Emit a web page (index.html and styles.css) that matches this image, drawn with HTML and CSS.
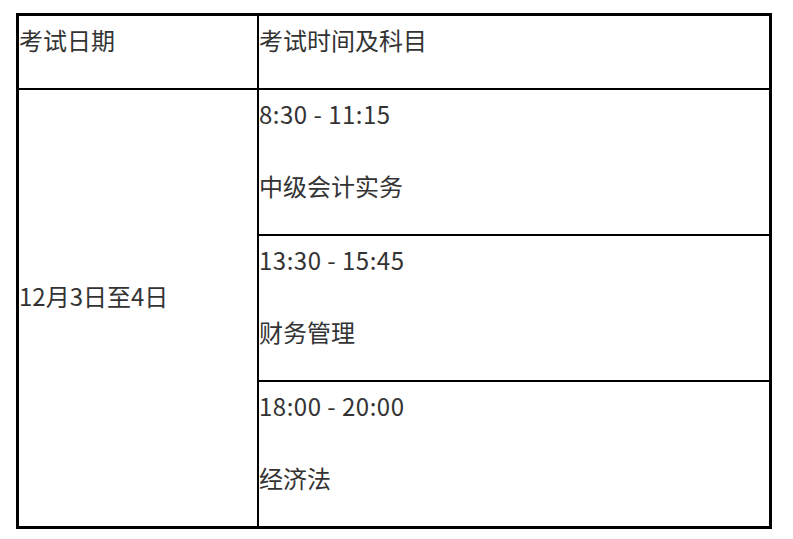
FILE: index.html
```html
<!DOCTYPE html>
<html lang="zh-CN">
<head>
<meta charset="utf-8">
<title>考试时间</title>
<link rel="stylesheet" href="styles.css">
</head>
<body>
<table class="exam">
  <tr>
    <th class="col-date"><p>考试日期</p></th>
    <th class="col-subj"><p>考试时间及科目</p></th>
  </tr>
  <tr>
    <td class="col-date mid" rowspan="3"><p>12月3日至4日</p></td>
    <td class="col-subj"><p class="time">8:30 - 11:15</p><p>中级会计实务</p></td>
  </tr>
  <tr>
    <td class="col-subj"><p class="time">13:30 - 15:45</p><p>财务管理</p></td>
  </tr>
  <tr>
    <td class="col-subj last"><p class="time">18:00 - 20:00</p><p>经济法</p></td>
  </tr>
</table>
</body>
</html>
```
FILE: styles.css
```css
html, body {
  margin: 0;
  padding: 0;
  background: #fff;
}
body {
  font-family: "Noto Sans CJK SC", "Noto Sans", sans-serif;
  font-size: 24px;
  color: #333;
}
.exam {
  margin: 13px 0 0 16px;
  border: 3px solid #000;
  border-spacing: 0;
  border-collapse: separate;
}
.exam th, .exam td {
  padding: 0;
  vertical-align: top;
  text-align: left;
  font-weight: normal;
  border-bottom: 2px solid #000;
}
.exam .col-date {
  width: 238px;
  border-right: 2px solid #000;
}
.exam .col-subj {
  width: 510px;
}
.exam td.mid {
  vertical-align: middle;
  border-bottom: none;
}
.exam td.last {
  border-bottom: none;
}
.exam p {
  margin: 0 0 24px;
  line-height: 48px;
  white-space: nowrap;
}
.exam p.time {
  letter-spacing: 0.5px;
}
```
